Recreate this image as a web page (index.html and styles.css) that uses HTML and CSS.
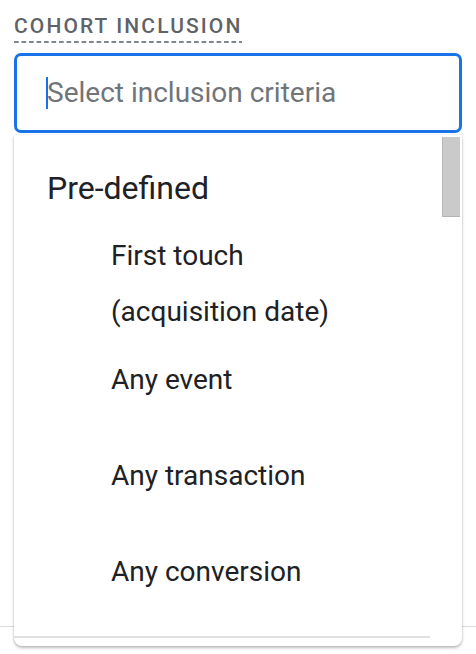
FILE: index.html
```html
<!DOCTYPE html>
<html>
<head>
<meta charset="utf-8">
<link rel="stylesheet" href="styles.css">
</head>
<body>
<div class="page">
  <div class="field">
    <div class="label-row"><span class="label">COHORT INCLUSION</span></div>
    <div class="input">
      <span class="caret"></span><span class="placeholder">Select inclusion criteria</span>
    </div>
    <div class="menu">
      <div class="list">
        <div class="group-title">Pre-defined</div>
        <div class="option"><span>First touch<br>(acquisition date)</span></div>
        <div class="option"><span>Any event</span></div>
        <div class="option"><span>Any transaction</span></div>
        <div class="option"><span>Any conversion</span></div>
        <div class="divider"></div>
      </div>
      <div class="track"><div class="thumb"></div></div>
    </div>
  </div>
  <div class="rule"></div>
</div>
</body>
</html>
```
FILE: styles.css
```css
html, body {
  margin: 0;
  padding: 0;
  background: #ffffff;
}
body {
  font-family: Roboto, "Noto Sans", "Liberation Sans", sans-serif;
  width: 476px;
  height: 654px;
  overflow: hidden;
}
.page {
  padding: 0 14px;
}
.field {
  position: relative;
}
.label-row {
  display: flex;
  padding-top: 13px;
}
.label {
  font-size: 21px;
  font-weight: 500;
  letter-spacing: 2.1px;
  color: #5f6368;
  line-height: 26px;
  background-image: linear-gradient(to right, #80868b 0 5px, transparent 5px 7.5px);
  background-size: 7.5px 2px;
  background-repeat: repeat-x;
  background-position: 0 100%;
  padding-bottom: 4px;
}
.input {
  margin-top: 10px;
  height: 74px;
  border: 3px solid #1a73e8;
  border-radius: 7px;
  display: flex;
  align-items: center;
  padding-left: 29px;
}
.caret {
  width: 2px;
  height: 32px;
  background: #1a73e8;
  margin-right: -1px;
}
.placeholder {
  font-size: 28px;
  color: #70757a;
  line-height: 32px;
}
.menu {
  position: absolute;
  left: 0;
  right: 0;
  top: 135px;
  height: 511px;
  background: #ffffff;
  border-radius: 0 0 8px 8px;
  box-shadow: 0 2px 3px rgba(0,0,0,0.25), 0 0 2px rgba(0,0,0,0.12);
  overflow: hidden;
  display: flex;
  z-index: 2;
}
.list {
  flex: 1;
  color: #202124;
}
.group-title {
  height: 101px;
  box-sizing: border-box;
  padding: 25px 0 0 33px;
  font-size: 32px;
  line-height: 56px;
}
.option {
  height: 96px;
  display: flex;
  align-items: center;
  padding-left: 97px;
  font-size: 28px;
  line-height: 56px;
}
.option span {
  white-space: nowrap;
}
.divider {
  margin-top: 16px;
  margin-right: 12px;
  height: 2px;
  background: #e0e0e0;
}
.track {
  width: 20px;
}
.thumb {
  margin-top: 2px;
  width: 18px;
  height: 80px;
  box-sizing: border-box;
  background: #cacaca;
  border-left: 1px solid #b4b4b4;
  border-bottom: 1px solid #b4b4b4;
}
.rule {
  margin: 0 -14px;
  height: 1px;
  background: #dadce0;
  margin-top: 493px;
}
```
